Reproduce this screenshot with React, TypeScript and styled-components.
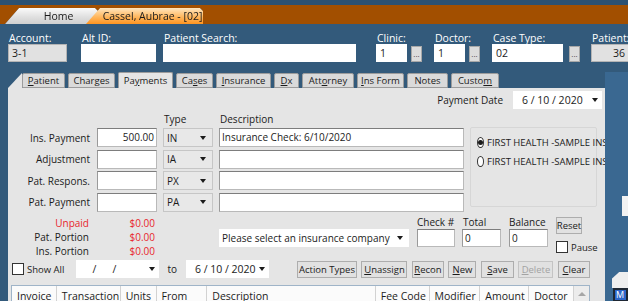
import styled, { createGlobalStyle } from 'styled-components';

const GlobalStyle = createGlobalStyle`
  html, body { margin: 0; padding: 0; }
  body {
    background: #335a7b;
    font-family: 'Open Sans', 'Noto Sans', sans-serif;
    font-size: 9.5px;
    color: #1b1b1b;
  }
  * { box-sizing: border-box; }
`;

const Screen = styled.div`
  width: 628px;
  height: 301px;
  overflow: hidden;
  display: flex;
  flex-direction: column;
  background: #335a7b;
  & > * { flex-shrink: 0; }
`;

const TopStrip = styled.div`
  height: 5px;
  background: #2b5172;
`;

const DocBar = styled.div`
  height: 19px;
  background: #a24f00;
  display: flex;
  align-items: flex-end;
  padding-left: 5px;
`;

const DocTabs = styled.div`
  display: flex;
  align-items: flex-end;
  filter: drop-shadow(0 0 0.6px rgba(0, 0, 0, 0.9));
`;

const DocTab = styled.div<{ $w: number; $active?: boolean }>`
  width: ${(p) => p.$w}px;
  height: 16px;
  margin-left: ${(p) => (p.$active ? -12 : 0)}px;
  padding-left: ${(p) => (p.$active ? 16 : 14)}px;
  display: flex;
  align-items: center;
  justify-content: center;
  font-size: 10.5px;
  white-space: nowrap;
  color: #1a1a1a;
  clip-path: polygon(0 100%, 14px 0, calc(100% - 3px) 0, 100% 3px, 100% 100%);
  background: ${(p) =>
    p.$active
      ? 'linear-gradient(#ffe6bf, #ffb860 55%, #ff9420)'
      : 'linear-gradient(#fafafa, #dedede 60%, #cfcfcf)'};
`;

const Header = styled.div`
  display: flex;
  align-items: flex-end;
  padding: 8px 0 0 8px;
`;

const HField = styled.div<{ $gap: number }>`
  display: flex;
  flex-direction: column;
  margin-right: ${(p) => p.$gap}px;
`;

const HLabel = styled.div`
  color: #ffffff;
  font-size: 10.5px;
  height: 12px;
  line-height: 12px;
  padding-left: 1px;
  white-space: nowrap;
`;

const HInputs = styled.div<{ $gap: number }>`
  display: flex;
  align-items: flex-end;
  gap: ${(p) => p.$gap}px;
`;

const HBox = styled.div<{ $w: number; $gray?: boolean; $right?: boolean }>`
  width: ${(p) => p.$w}px;
  height: 18px;
  background: ${(p) => (p.$gray ? '#e1e1e1' : '#ffffff')};
  border: 1px solid ${(p) => (p.$gray ? '#b4b4b4' : '#ffffff')};
  font-size: 10.5px;
  line-height: 16px;
  padding: 0 3px;
  text-align: ${(p) => (p.$right ? 'right' : 'left')};
  white-space: nowrap;
  overflow: hidden;
`;

const DotsButton = styled.div`
  width: 11px;
  height: 16px;
  background: #dcdcdc;
  border: 1px solid #a8a8a8;
  font-size: 8px;
  line-height: 14px;
  text-align: center;
  color: #444;
`;

const Body = styled.div`
  display: flex;
  flex: 1;
  margin-top: 10px;
`;

const Work = styled.div`
  width: 605px;
  padding-left: 8px;
  display: flex;
  flex-direction: column;
`;

const TabRow = styled.div`
  height: 16px;
  display: flex;
  align-items: flex-end;
`;

const Chamfer = styled.div`
  width: 14px;
  height: 15px;
  background: #e5e5e5;
  clip-path: polygon(0 100%, 100% 0, 100% 100%);
`;

const Tab = styled.div<{ $w: number; $active?: boolean }>`
  width: ${(p) => p.$w}px;
  height: ${(p) => (p.$active ? 16 : 15)}px;
  margin-right: 3px;
  display: flex;
  align-items: center;
  justify-content: center;
  background: ${(p) => (p.$active ? '#e5e5e5' : '#dadada')};
  border: 1px solid #9c9c9c;
  border-bottom: ${(p) => (p.$active ? 'none' : '1px solid #9c9c9c')};
  border-radius: 2px 2px 0 0;
  font-size: 9.5px;
  padding-bottom: ${(p) => (p.$active ? 1 : 0)}px;
  u { text-decoration: underline; }
`;

const Panel = styled.div`
  flex: 1;
  background: #e5e5e5;
  display: flex;
  flex-direction: column;
`;

const DateRow = styled.div`
  display: flex;
  justify-content: flex-end;
  align-items: center;
  gap: 10px;
  padding: 3px 3px 0 0;
`;

const DateLabel = styled.span`
  font-size: 10px;
`;

const DatePick = styled.div<{ $w: number; $pl?: number; $ml?: number }>`
  width: ${(p) => p.$w}px;
  height: 18px;
  margin-left: ${(p) => p.$ml ?? 0}px;
  background: #ffffff;
  display: flex;
  align-items: center;
  justify-content: space-between;
  padding: 0 4px 0 ${(p) => p.$pl ?? 9}px;
  font-size: 10.5px;
  white-space: pre;
`;

const Caret = styled.span`
  width: 0;
  height: 0;
  border-left: 3.5px solid transparent;
  border-right: 3.5px solid transparent;
  border-top: 4px solid #1b1b1b;
`;

const FormGrid = styled.div`
  display: grid;
  grid-template-columns: 83px 60px 50px 245px 127px;
  grid-template-rows: 14px repeat(4, 19px);
  column-gap: 6px;
  row-gap: 2.4px;
  margin-top: 3px;
`;

const ColHead = styled.div<{ $col: number }>`
  grid-column: ${(p) => p.$col};
  padding-left: 1px;
  font-size: 10px;
`;

const RowLabel = styled.div`
  grid-column: 1;
  text-align: right;
  align-self: center;
  padding-right: 1px;
  font-size: 10px;
`;

const TextBox = styled.div<{ $right?: boolean }>`
  background: #ffffff;
  border: 1px solid #b9b9b9;
  border-top-color: #7d7d7d;
  border-left-color: #9a9a9a;
  font-size: 10px;
  line-height: 16px;
  padding: 0 2px;
  text-align: ${(p) => (p.$right ? 'right' : 'left')};
  white-space: nowrap;
  overflow: hidden;
`;

const TypeSelect = styled.div`
  background: #e8e8e8;
  border: 1px solid #c6c6c6;
  display: flex;
  align-items: center;
  justify-content: space-between;
  padding: 0 6px 0 3px;
  font-size: 10px;
`;

const InsGroup = styled.div`
  grid-column: 5;
  grid-row: 2 / span 4;
  align-self: start;
  height: 80px;
  margin-top: -1px;
  border: 1px solid #d6d6d6;
  border-radius: 2px;
  padding: 8px 0 0 6px;
  display: flex;
  flex-direction: column;
  gap: 6px;
`;

const RadioRow = styled.div`
  display: flex;
  align-items: center;
  gap: 3px;
  font-size: 9.5px;
  white-space: nowrap;
`;

const Radio = styled.span<{ $on?: boolean }>`
  width: 11px;
  height: 11px;
  border-radius: 50%;
  border: 1px solid #333;
  background: #fff;
  display: flex;
  align-items: center;
  justify-content: center;
  &::after {
    content: '';
    width: 5px;
    height: 5px;
    border-radius: 50%;
    background: ${(p) => (p.$on ? '#1b1b1b' : 'transparent')};
  }
`;

const SummaryRow = styled.div`
  display: flex;
  align-items: flex-start;
  margin-top: 4px;
`;

const Totals = styled.div`
  display: grid;
  grid-template-columns: 81px 66px;
  grid-auto-rows: 14px;
`;

const TotalLabel = styled.div<{ $red?: boolean }>`
  text-align: right;
  color: ${(p) => (p.$red ? '#e8262c' : '#1b1b1b')};
  font-size: 10px;
  line-height: 14px;
`;

const TotalValue = styled.div`
  text-align: right;
  color: #e8262c;
  font-size: 10px;
  line-height: 14px;
`;

const InsSelect = styled.div`
  width: 190px;
  height: 18px;
  margin: 13px 0 0 64px;
  background: #ffffff;
  display: flex;
  align-items: center;
  justify-content: space-between;
  padding: 0 6px 0 3px;
  font-size: 10px;
`;

const SmallField = styled.div<{ $ml: number; $w: number }>`
  margin-left: ${(p) => p.$ml}px;
  width: ${(p) => p.$w}px;
  display: flex;
  flex-direction: column;
`;

const SmallLabel = styled.div<{ $pl?: number }>`
  height: 13px;
  line-height: 13px;
  padding-left: ${(p) => p.$pl ?? 0}px;
  font-size: 10px;
  white-space: nowrap;
`;

const SmallBox = styled(TextBox)`
  height: 18px;
`;

const ResetCol = styled.div`
  margin-left: 8px;
  display: flex;
  flex-direction: column;
  gap: 7px;
  padding-top: 1px;
`;

const Button = styled.div<{ $w: number; $disabled?: boolean }>`
  width: ${(p) => p.$w}px;
  height: 17px;
  background: #e1e1e1;
  border: 1px solid ${(p) => (p.$disabled ? '#c4c4c4' : '#adadad')};
  color: ${(p) => (p.$disabled ? '#a3a3a3' : '#1b1b1b')};
  display: flex;
  align-items: center;
  justify-content: center;
  font-size: 9.5px;
  white-space: nowrap;
`;

const CheckRow = styled.div`
  display: flex;
  align-items: center;
  gap: 3px;
  font-size: 9.5px;
`;

const CheckBox = styled.span`
  width: 12px;
  height: 12px;
  background: #ffffff;
  border: 1px solid #333;
`;

const Toolbar = styled.div`
  display: flex;
  align-items: center;
  height: 19px;
  margin-top: 2px;
  padding-left: 4px;
`;

const ToLabel = styled.span`
  margin: 0 9px 0 8px;
  font-size: 10px;
`;

const Buttons = styled.div`
  display: flex;
  gap: 4.5px;
  margin-left: 28px;
`;

const DataGrid = styled.div`
  margin: 6px 0 0 3px;
  width: 579px;
  flex: 1;
  background: #ffffff;
  border: 1px solid #9fb4c8;
  display: flex;
  align-items: flex-start;
`;

const GridHead = styled.div<{ $w: number }>`
  width: ${(p) => p.$w}px;
  height: 18px;
  padding: 3px 0 0 5px;
  border-right: 1px solid #d2d2d2;
  font-size: 10.5px;
  color: #1b1b1b;
  white-space: nowrap;
  overflow: hidden;
  background: #fbfbfb;
`;

const ScrollUp = styled.div`
  width: 15px;
  height: 16px;
  background: #ececec;
  display: flex;
  align-items: center;
  justify-content: center;
  &::after {
    content: '';
    border-left: 4px solid transparent;
    border-right: 4px solid transparent;
    border-bottom: 4px solid #a6a6a6;
  }
`;

const SideStrip = styled.div`
  width: 23px;
  display: flex;
  flex-direction: column;
  align-items: flex-end;
  background: #3a6891;
`;

const SideWhite = styled.div`
  width: 6px;
  height: 20px;
  margin-top: 124px;
  background: #f2f2f2;
`;

const SideDoc = styled.div`
  width: 16px;
  height: 16px;
  margin-top: 56px;
  background: #eeeeee;
  clip-path: polygon(0 40%, 45% 0, 100% 0, 100% 100%, 0 100%);
`;

const SideIcon = styled.div`
  width: 15px;
  height: 14px;
  border: 2px solid #1e2733;
  background: #2d66c9;
  color: #ffffff;
  font-size: 9px;
  line-height: 10px;
  padding-left: 1px;
`;

const docTabs = [
  { w: 93, label: 'Home' },
  { w: 117, label: 'Cassel, Aubrae - [02]', active: true },
];

const pageTabs: { w: number; node: React.ReactNode; active?: boolean }[] = [
  { w: 43, node: <><u>P</u>atient</> },
  { w: 47, node: <>Char<u>g</u>es</> },
  { w: 55, node: <>Pa<u>y</u>ments</>, active: true },
  { w: 37, node: <>Ca<u>s</u>es</> },
  { w: 55, node: <><u>I</u>nsurance</> },
  { w: 25, node: <><u>D</u>x</> },
  { w: 52, node: <>Att<u>o</u>rney</> },
  { w: 47, node: <><u>I</u>ns Form</> },
  { w: 41, node: <>Notes</> },
  { w: 48, node: <>Custo<u>m</u></> },
];

const rows = [
  { label: 'Ins. Payment', amount: '500.00', type: 'IN', desc: 'Insurance Check: 6/10/2020' },
  { label: 'Adjustment', amount: '', type: 'IA', desc: '' },
  { label: 'Pat. Respons.', amount: '', type: 'PX', desc: '' },
  { label: 'Pat. Payment', amount: '', type: 'PA', desc: '' },
];

const actions: { w: number; node: React.ReactNode; disabled?: boolean }[] = [
  { w: 60, node: <>Action Types</> },
  { w: 46, node: <><u>U</u>nassign</> },
  { w: 32, node: <><u>R</u>econ</> },
  { w: 28, node: <><u>N</u>ew</> },
  { w: 33, node: <><u>S</u>ave</> },
  { w: 35, node: <><u>D</u>elete</>, disabled: true },
  { w: 32, node: <><u>C</u>lear</> },
];

const columns = [
  { w: 45, label: 'Invoice' },
  { w: 64, label: 'Transaction' },
  { w: 36, label: 'Units' },
  { w: 51, label: 'From' },
  { w: 169, label: 'Description' },
  { w: 54, label: 'Fee Code' },
  { w: 51, label: 'Modifier' },
  { w: 49, label: 'Amount' },
  { w: 45, label: 'Doctor' },
];

export default function App() {
  return (
    <Screen>
      <GlobalStyle />
      <TopStrip />
      <DocBar>
        <DocTabs>
          {docTabs.map((t) => (
            <DocTab key={t.label} $w={t.w} $active={t.active}>
              {t.label}
            </DocTab>
          ))}
        </DocTabs>
      </DocBar>

      <Header>
        <HField $gap={14}>
          <HLabel>Account:</HLabel>
          <HBox $w={59} $gray>3-1</HBox>
        </HField>
        <HField $gap={7}>
          <HLabel>Alt ID:</HLabel>
          <HBox $w={75} />
        </HField>
        <HField $gap={20}>
          <HLabel>Patient Search:</HLabel>
          <HBox $w={193} />
        </HField>
        <HField $gap={12}>
          <HLabel>Clinic:</HLabel>
          <HInputs $gap={4}>
            <HBox $w={31}>1</HBox>
            <DotsButton>...</DotsButton>
          </HInputs>
        </HField>
        <HField $gap={12}>
          <HLabel>Doctor:</HLabel>
          <HInputs $gap={4}>
            <HBox $w={31}>1</HBox>
            <DotsButton>...</DotsButton>
          </HInputs>
        </HField>
        <HField $gap={11}>
          <HLabel>Case Type:</HLabel>
          <HInputs $gap={6}>
            <HBox $w={71}>02</HBox>
            <DotsButton>...</DotsButton>
          </HInputs>
        </HField>
        <HField $gap={0}>
          <HLabel>Patient:</HLabel>
          <HBox $w={38} $gray $right>
            36
          </HBox>
        </HField>
      </Header>

      <Body>
        <Work>
          <TabRow>
            <Chamfer />
            {pageTabs.map((t, i) => (
              <Tab key={i} $w={t.w} $active={t.active}>
                {t.node}
              </Tab>
            ))}
          </TabRow>
          <Panel>
            <DateRow>
              <DateLabel>Payment Date</DateLabel>
              <DatePick $w={89}>
                6 / 10 / 2020 <Caret />
              </DatePick>
            </DateRow>

            <FormGrid>
              <ColHead $col={3}>Type</ColHead>
              <ColHead $col={4}>Description</ColHead>
              {rows.map((r) => [
                <RowLabel key={`${r.type}-l`}>{r.label}</RowLabel>,
                <TextBox key={`${r.type}-a`} $right>
                  {r.amount}
                </TextBox>,
                <TypeSelect key={`${r.type}-t`}>
                  {r.type}
                  <Caret />
                </TypeSelect>,
                <TextBox key={`${r.type}-d`}>{r.desc}</TextBox>,
              ])}
              <InsGroup>
                <RadioRow>
                  <Radio $on />
                  FIRST HEALTH -SAMPLE INS
                </RadioRow>
                <RadioRow>
                  <Radio />
                  FIRST HEALTH -SAMPLE INS
                </RadioRow>
              </InsGroup>
            </FormGrid>

            <SummaryRow>
              <Totals>
                <TotalLabel $red>Unpaid</TotalLabel>
                <TotalValue>$0.00</TotalValue>
                <TotalLabel>Pat. Portion</TotalLabel>
                <TotalValue>$0.00</TotalValue>
                <TotalLabel>Ins. Portion</TotalLabel>
                <TotalValue>$0.00</TotalValue>
              </Totals>
              <InsSelect>
                Please select an insurance company
                <Caret />
              </InsSelect>
              <SmallField $ml={8} $w={38}>
                <SmallLabel>Check #</SmallLabel>
                <SmallBox />
              </SmallField>
              <SmallField $ml={7} $w={39}>
                <SmallLabel $pl={1}>Total</SmallLabel>
                <SmallBox>0</SmallBox>
              </SmallField>
              <SmallField $ml={8} $w={39}>
                <SmallLabel>Balance</SmallLabel>
                <SmallBox>0</SmallBox>
              </SmallField>
              <ResetCol>
                <Button $w={26}>Reset</Button>
                <CheckRow>
                  <CheckBox />
                  Pause
                </CheckRow>
              </ResetCol>
            </SummaryRow>

            <Toolbar>
              <CheckRow>
                <CheckBox />
                Show All
              </CheckRow>
              <DatePick $w={83} $ml={12} $pl={16}>
                {'/      /'}
                <Caret />
              </DatePick>
              <ToLabel>to</ToLabel>
              <DatePick $w={83}>
                6 / 10 / 2020
                <Caret />
              </DatePick>
              <Buttons>
                {actions.map((a, i) => (
                  <Button key={i} $w={a.w} $disabled={a.disabled}>
                    {a.node}
                  </Button>
                ))}
              </Buttons>
            </Toolbar>

            <DataGrid>
              {columns.map((c) => (
                <GridHead key={c.label} $w={c.w}>
                  {c.label}
                </GridHead>
              ))}
              <ScrollUp />
            </DataGrid>
          </Panel>
        </Work>
        <SideStrip>
          <SideWhite />
          <SideDoc />
          <SideIcon>M</SideIcon>
        </SideStrip>
      </Body>
    </Screen>
  );
}
